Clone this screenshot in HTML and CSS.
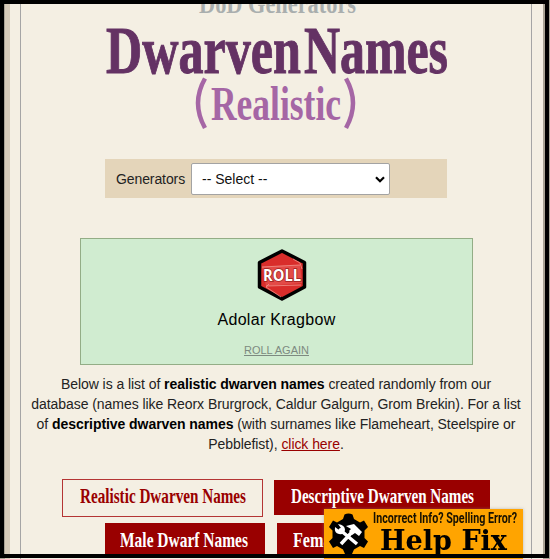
FILE: index.html
```html
<!DOCTYPE html>
<html lang="en">
<head>
<meta charset="utf-8">
<title>Dwarven Names (Realistic)</title>
<link rel="stylesheet" href="styles.css">
</head>
<body>
<div class="page">
  <main class="content">
    <header>
      <svg class="masthead" width="510" height="130" viewBox="21 0 510 130">
        <text class="kicker" x="199" y="13" textLength="157" lengthAdjust="spacingAndGlyphs">DoD Generators</text>
        <text class="title" x="106" y="73" textLength="195" lengthAdjust="spacingAndGlyphs">Dwarven</text>
        <text class="title" x="304" y="73" textLength="144" lengthAdjust="spacingAndGlyphs">Names</text>
        <path class="paren" d="M205 78.500Q191 103 205 128M346 78.500Q360 103 346 128"/>
        <text class="subtitle" x="211" y="120" textLength="130" lengthAdjust="spacingAndGlyphs">Realistic</text>
      </svg>
    </header>
    <form class="picker">
      <label for="gen">Generators</label>
      <div class="select">
        <select id="gen"><option>-- Select --</option></select>
        <svg class="chevron" width="10" height="7" viewBox="0 0 10 7"><path d="M1 1.200L5 5.200L9 1.200"/></svg>
      </div>
    </form>
    <section class="result">
      <svg class="die" width="50" height="52" viewBox="0 0 50 52">
        <path class="die-body" d="M25 2L47.500 13.500V38L25 50L2.500 38V13.500Z"/>
        <path class="die-face" d="M5 18L43 16L45 34L9 37Z"/>
        <path class="die-edge" d="M36 10L43 14L45 20M5 18L43 16M9 37L44 36M12 35L9 38L24 48"/>
        <text class="die-text" x="6" y="31.500" textLength="38" lengthAdjust="spacingAndGlyphs">ROLL</text>
      </svg>
      <div class="name">Adolar Kragbow</div>
      <a class="again">ROLL AGAIN</a>
    </section>
    <p class="intro">Below is a list of <b>realistic dwarven names</b> created randomly from our<br>database (names like Reorx Brurgrock, Caldur Galgurn, Grom Brekin). For a list<br>of <b>descriptive dwarven names</b> (with surnames like Flameheart, Steelspire or<br>Pebblefist), <a>click here</a>.</p>
    <nav>
      <div class="row">
        <a class="button current"><svg width="167" height="30"><text x="0" y="22" textLength="166" lengthAdjust="spacingAndGlyphs">Realistic Dwarven Names</text></svg></a>
        <a class="button wide"><svg width="184" height="30"><text x="0" y="22" textLength="183" lengthAdjust="spacingAndGlyphs">Descriptive Dwarven Names</text></svg></a>
      </div>
      <div class="row second">
        <a class="button male"><svg width="129" height="30"><text x="0" y="22" textLength="128" lengthAdjust="spacingAndGlyphs">Male Dwarf Names</text></svg></a>
        <a class="button female"><svg width="150" height="30"><text x="0" y="22" textLength="149" lengthAdjust="spacingAndGlyphs">Female Dwarf Names</text></svg></a>
      </div>
    </nav>
  </main>
</div>
<a class="help">
  <svg width="199" height="50" viewBox="0 0 199 50">
    <path class="gear" d="M20.500 5.500Q24.500 3.500 28.500 5.500L30 10L36 13.500L40 11.500L44 18L40.500 21.500V29L44 32.500L40 39L36 37L30 40.500L28 45H21L19 40.500L13 37L9 39L5 32.500L8.500 29V21.500L5 18L9 11.500L13 13.500L19 10Z"/>
    <path class="tool" d="M15 20L33 35M29 22L17 35"/>
    <path class="tool-head" d="M22 17L30 15L35 20L38 23L35 27L31 24L28 26L25 22L27 20ZM14 15L17 19L15 21L11 18Q10 24 15 25Q20 26 21 21Q21 16 14 15Z"/>
    <text class="help-small" x="49" y="13.500" textLength="144" lengthAdjust="spacingAndGlyphs">Incorrect Info? Spelling Error?</text>
    <text class="help-big" x="56" y="41" textLength="127" lengthAdjust="spacingAndGlyphs">Help Fix</text>
  </svg>
</a>
<div class="frame"></div>
</body>
</html>
```
FILE: styles.css
```css
* { box-sizing: border-box; }
html, body { height: 559px; overflow: hidden; }
body { margin: 0; background: #a9a294; font: 14px/20px "Liberation Sans", Arial, sans-serif; color: #222; }
svg { display: block; }
.page { width: 538px; height: 559px; margin-left: 5px; border-left: 5px solid #d6cab8; padding: 0 11px 0 10px; background: #f4efe3; }
.content { width: 512px; height: 559px; border: solid #a5a5a5; border-width: 0 1px; }
text { font-family: "Liberation Serif", "Times New Roman", serif; font-weight: bold; }
.kicker { font-size: 28px; fill: #a9aeae; }
.title { font-size: 68px; fill: #643264; stroke: #643264; stroke-width: 1; }
.subtitle { font-size: 48px; fill: #a566a5; }
.paren { fill: none; stroke: #a566a5; stroke-width: 4.500; }
.picker { display: flex; align-items: center; width: 342px; height: 39px; margin: 29px 0 0 84px; padding-left: 11px; background: #e4d5ba; }
.picker label { width: 75px; letter-spacing: -.1px; }
.select { position: relative; width: 199px; height: 32px; }
select { appearance: none; width: 199px; height: 32px; padding: 0 10px; border: 1px solid #a3a3a3; border-radius: 2px; background: #fff; color: #111; font: 14px "Liberation Sans", Arial, sans-serif; }
.chevron { position: absolute; right: 5px; top: 13px; fill: none; stroke: #000; stroke-width: 2.200; }
.result { display: flex; flex-direction: column; align-items: center; width: 393px; height: 127px; margin: 40px 0 0 59px; padding-top: 10px; border: 1px solid #93ad86; background: #d0ecd0; }
.die { margin-left: 11px; }
.die-body { fill: #d92d2b; stroke: #000; stroke-width: 3.500; stroke-linejoin: round; }
.die-face { fill: #e34a47; }
.die-edge { fill: none; stroke: #f0948c; stroke-width: .8; }
.die-text { font: bold 16px "Open Sans", sans-serif; fill: #fff; stroke: #9c1e1c; stroke-width: 1.500; paint-order: stroke; }
.name { margin-top: 9px; color: #000; font-size: 16px; letter-spacing: .3px; }
.again { margin-top: 11px; color: #7d8a80; font-size: 11px; line-height: 18px; text-decoration: underline; }
.intro { margin: 9px 0 0; text-align: center; white-space: nowrap; line-height: 20px; letter-spacing: -.06px; }
.intro b { color: #000; }
.intro a { color: #900; text-decoration: underline; }
nav { margin-top: 25px; }
.row { display: flex; align-items: flex-start; height: 38px; margin-left: 41px; }
.row.second { margin: 6px 0 0 84px; }
.button { height: 35px; padding: 1px 17px; background: #900; fill: #fff; }
.button text { font-size: 21px; }
.current { width: 201px; height: 38px; border: 1px solid #b43434; background: none; fill: #900; }
.wide { width: 216px; margin: 1px 0 0 11px; }
.male { width: 160px; padding: 2px 15px; }
.female { width: 182px; margin-left: 12px; padding: 2px 16px; }
.help { position: fixed; left: 324px; top: 509px; width: 199px; height: 50px; background: #ffa400; box-shadow: 0 0 3px #8888; }
.tool { fill: none; stroke: #fff; stroke-width: 3.500; }
.tool-head { fill: #fff; }
.help-small { font: bold 14px "Roboto", sans-serif; fill: #171100; }
.help-big { font: bold 28px "DejaVu Serif", serif; fill: #000; }
.frame { position: fixed; inset: 0 1px 1px 0; border: 4px solid #000; }
```
